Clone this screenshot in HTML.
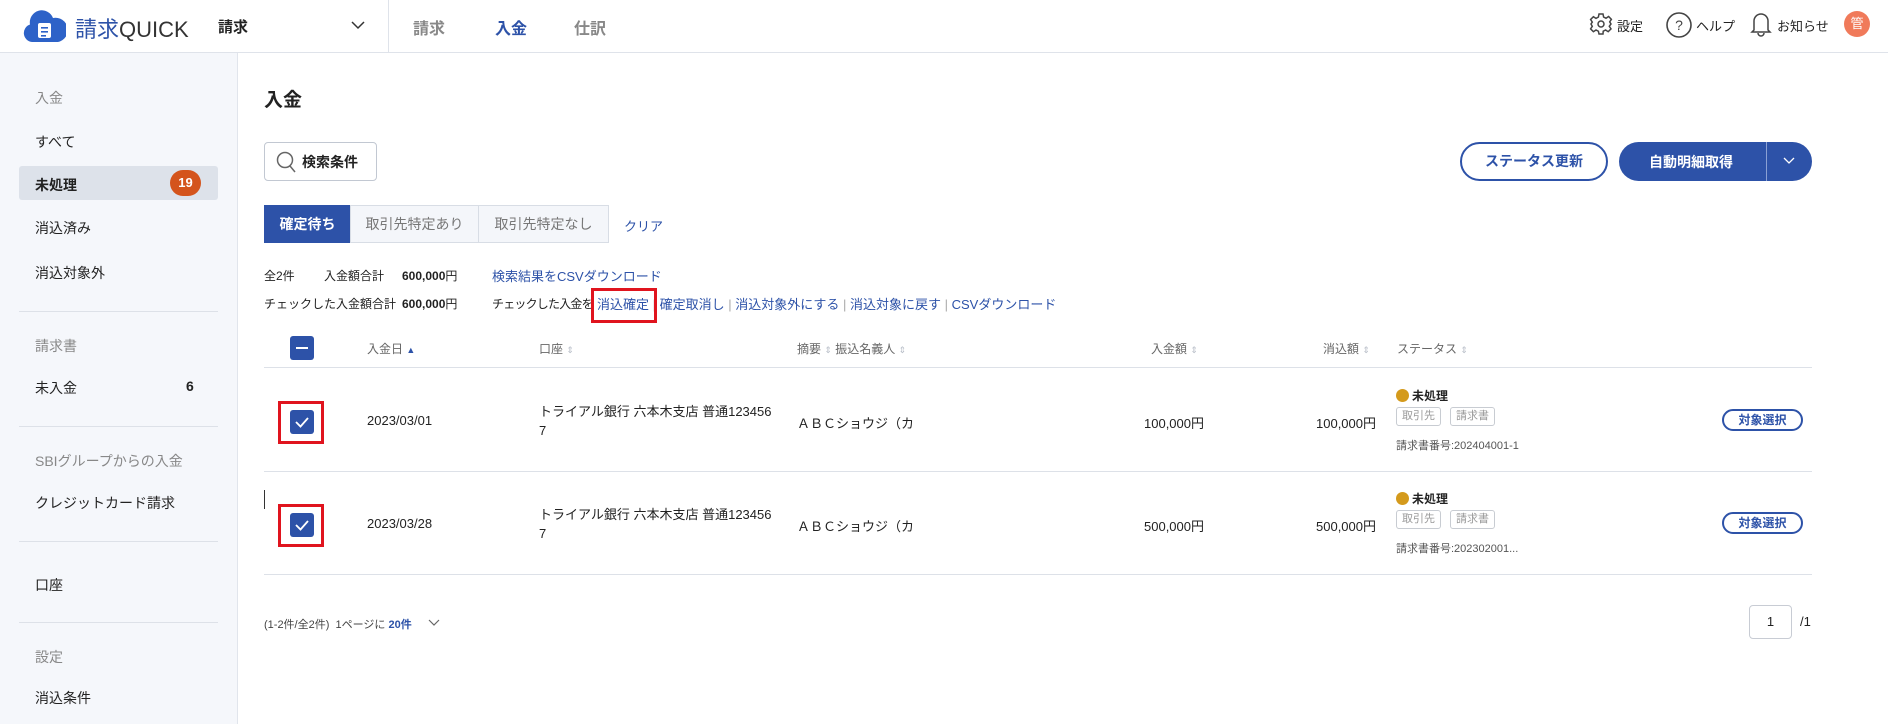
<!DOCTYPE html>
<html><head><meta charset="utf-8"><style>
*{margin:0;padding:0;box-sizing:border-box}
body{width:1888px;height:724px;position:relative;overflow:hidden;background:#fff;font-family:"Liberation Sans","Noto Sans CJK JP",sans-serif;color:#222;font-size:14px}
.a{position:absolute;white-space:nowrap}
.lnk{color:#2d52a8}
.g{color:#888}
.hdr{position:absolute;left:0;top:0;width:1888px;height:53px;border-bottom:1px solid #dfe3ea;background:#fff}
.side{position:absolute;left:0;top:53px;width:238px;height:671px;background:#f5f7fb;border-right:1px solid #e1e5ec}
.div{position:absolute;left:19px;width:199px;height:1px;background:#dde1e8}
.tab{position:absolute;top:205px;height:38px;line-height:36px;text-align:center;font-size:14px;color:#777;background:#f4f6fa;border:1px solid #d8dde5}
.th{position:absolute;top:340px;font-size:12px;color:#666}
.ar{color:#b8bec8;font-size:9px}
.cb{position:absolute;width:24px;height:24px;background:#2d52a8;border-radius:3px}
.red{position:absolute;border:3px solid #e0141e}
.tag{position:absolute;height:19px;border:1px solid #c8ccd2;border-radius:3px;font-size:11px;color:#999;line-height:17px;padding:0 5px}
.pill{position:absolute;width:81px;height:22px;border:2px solid #2d52a8;border-radius:11px;color:#2d52a8;font-size:12px;font-weight:bold;text-align:center;line-height:18px}
.hl{position:absolute;left:264px;width:1548px;height:1px;background:#dde1e8}
.sm{font-size:12px}
</style></head><body>
<div class="hdr"></div>
<svg class="a" style="left:22px;top:10px" width="44" height="34" viewBox="0 0 44 34"><path d="M10 32a9 9 0 0 1-2-17.5A12 12 0 0 1 31 8a9 9 0 0 1 5 24z" fill="#2d62c8"/><rect x="16" y="13" width="13" height="15" rx="2" fill="#fff"/><rect x="19" y="17" width="7" height="1.6" fill="#2d62c8"/><rect x="19" y="21" width="7" height="1.6" fill="#2d62c8"/><rect x="19" y="25" width="5" height="1.6" fill="#2d62c8"/></svg>
<div class="a" style="left:75px;top:12px;font-size:22px;color:#2d52a8">請求<span style="color:#333">QUICK</span></div>
<div class="a" style="left:218px;top:16px;font-size:15px;font-weight:bold">請求</div>
<svg class="a" style="left:351px;top:21px" width="14" height="9"><path d="M1 1l6 6 6-6" stroke="#333" stroke-width="1.5" fill="none"/></svg>
<div class="a" style="left:388px;top:0;width:1px;height:53px;background:#dfe3ea"></div>
<div class="a" style="left:413px;top:15px;font-size:16px;color:#888;font-weight:bold">請求</div>
<div class="a" style="left:495px;top:15px;font-size:16px;color:#2d52a8;font-weight:bold">入金</div>
<div class="a" style="left:574px;top:15px;font-size:16px;color:#888;font-weight:bold">仕訳</div>
<svg class="a" style="left:1589px;top:12px" width="24" height="24" viewBox="0 0 24 24"><path d="M10 2h4l.6 3 2.4 1.2 2.6-1.7 2.8 2.8-1.7 2.6L22 12l-1.7 2.3 1.7 2.6-2.8 2.8-2.6-1.7-2.4 1.2L14 22h-4l-.6-2.8-2.4-1.2-2.6 1.7-2.8-2.8 1.7-2.6L2 12l1.3-1.9-1.7-2.6 2.8-2.8 2.6 1.7L9.4 5z" stroke="#444" stroke-width="1.5" fill="none"/><circle cx="12" cy="12" r="3" stroke="#444" stroke-width="1.5" fill="none"/></svg>
<div class="a" style="left:1617px;top:16px;font-size:13px">設定</div>
<svg class="a" style="left:1665px;top:11px" width="28" height="28"><circle cx="14" cy="14" r="12" stroke="#444" stroke-width="1.6" fill="none"/><text x="14" y="19" font-size="14" text-anchor="middle" fill="#444" font-family="Liberation Sans">?</text></svg>
<div class="a" style="left:1696px;top:16px;font-size:13px">ヘルプ</div>
<svg class="a" style="left:1750px;top:11px" width="22" height="26"><path d="M4 19V10a7 7 0 0 1 14 0v9l2 2H2z M8 22a3 3 0 0 0 6 0" stroke="#444" stroke-width="1.5" fill="none"/></svg>
<div class="a" style="left:1777px;top:16px;font-size:13px">お知らせ</div>
<div class="a" style="left:1844px;top:11px;width:26px;height:26px;border-radius:13px;background:#f07a5a;color:#fff;font-size:13px;text-align:center;line-height:26px">管</div>

<div class="side"></div>
<div class="a g" style="left:35px;top:88px">入金</div>
<div class="a" style="left:35px;top:132px">すべて</div>
<div class="a" style="left:19px;top:166px;width:199px;height:34px;background:#dde2ea;border-radius:3px"></div>
<div class="a" style="left:35px;top:175px;font-weight:bold">未処理</div>
<div class="a" style="left:170px;top:170px;width:31px;height:26px;border-radius:13px;background:#d4541c;color:#fff;font-size:13px;font-weight:bold;text-align:center;line-height:26px">19</div>
<div class="a" style="left:35px;top:218px">消込済み</div>
<div class="a" style="left:35px;top:263px">消込対象外</div>
<div class="div" style="top:311px"></div>
<div class="a g" style="left:35px;top:336px">請求書</div>
<div class="a" style="left:35px;top:378px">未入金</div>
<div class="a" style="left:186px;top:378px;font-weight:bold">6</div>
<div class="div" style="top:426px"></div>
<div class="a g" style="left:35px;top:451px">SBIグループからの入金</div>
<div class="a" style="left:35px;top:493px">クレジットカード請求</div>
<div class="div" style="top:541px"></div>
<div class="a" style="left:35px;top:575px">口座</div>
<div class="div" style="top:622px"></div>
<div class="a g" style="left:35px;top:647px">設定</div>
<div class="a" style="left:35px;top:688px">消込条件</div>

<div class="a" style="left:264px;top:85px;font-size:19px;font-weight:bold">入金</div>
<div class="a" style="left:264px;top:142px;width:113px;height:39px;border:1px solid #c2c8d2;border-radius:4px"></div>
<svg class="a" style="left:275px;top:150px" width="22" height="24"><circle cx="10" cy="10" r="7.5" stroke="#666" stroke-width="1.5" fill="none"/><path d="M15 16l5 6" stroke="#666" stroke-width="1.5"/></svg>
<div class="a" style="left:302px;top:152px;font-size:14px;font-weight:bold">検索条件</div>
<div class="a" style="left:1460px;top:142px;width:148px;height:39px;border:2px solid #2d52a8;border-radius:20px;text-align:center;line-height:35px;font-size:14px;font-weight:bold;color:#2d52a8">ステータス更新</div>
<div class="a" style="left:1619px;top:142px;width:193px;height:39px;background:#2d52a8;border-radius:20px"></div>
<div class="a" style="left:1649px;top:152px;font-size:14px;font-weight:bold;color:#fff">自動明細取得</div>
<div class="a" style="left:1766px;top:142px;width:1px;height:39px;background:#8aa0d4"></div>
<svg class="a" style="left:1783px;top:157px" width="12" height="8"><path d="M1 1l5 5 5-5" stroke="#fff" stroke-width="1.3" fill="none"/></svg>

<div class="tab" style="left:264px;width:87px;background:#2d52a8;color:#fff;font-weight:bold;border-color:#2d52a8">確定待ち</div>
<div class="tab" style="left:350px;width:129px">取引先特定あり</div>
<div class="tab" style="left:478px;width:131px">取引先特定なし</div>
<div class="a lnk" style="left:624px;top:216px;font-size:13px">クリア</div>

<div class="a sm" style="left:264px;top:267px">全2件</div>
<div class="a sm" style="left:324px;top:267px">入金額合計</div>
<div class="a sm" style="left:402px;top:267px;font-weight:bold">600,000<span style="font-weight:normal">円</span></div>
<div class="a lnk" style="left:492px;top:266px;font-size:13px">検索結果をCSVダウンロード</div>
<div class="a sm" style="left:264px;top:295px">チェックした入金額合計</div>
<div class="a sm" style="left:402px;top:295px;font-weight:bold">600,000<span style="font-weight:normal">円</span></div>
<div class="a sm" style="left:492px;top:295px;letter-spacing:-0.8px">チェックした入金を</div>
<div class="a lnk" style="left:597px;top:294px;font-size:13px">消込確定 <span style="color:#aaa">|</span> 確定取消し <span style="color:#aaa">|</span> 消込対象外にする <span style="color:#aaa">|</span> 消込対象に戻す <span style="color:#aaa">|</span> CSVダウンロード</div>
<div class="red" style="left:591px;top:288px;width:66px;height:35px"></div>

<div class="cb" style="left:290px;top:336px"></div>
<div class="a" style="left:296px;top:347px;width:12px;height:2px;background:#fff"></div>
<div class="th" style="left:367px">入金日 <span style="color:#2d52a8;font-size:9px">▲</span></div>
<div class="th" style="left:539px">口座 <span class="ar">⇕</span></div>
<div class="th" style="left:797px">摘要 <span class="ar">⇕</span> 振込名義人 <span class="ar">⇕</span></div>
<div class="th" style="left:1151px">入金額 <span class="ar">⇕</span></div>
<div class="th" style="left:1323px">消込額 <span class="ar">⇕</span></div>
<div class="th" style="left:1397px">ステータス <span class="ar">⇕</span></div>
<div class="hl" style="top:367px"></div>
<div class="hl" style="top:471px"></div>
<div class="hl" style="top:574px"></div>

<div class="red" style="left:278px;top:401px;width:46px;height:43px"></div>
<div class="cb" style="left:290px;top:410px"></div>
<svg class="a" style="left:290px;top:410px" width="24" height="24"><path d="M6 12l4.5 4.5L18 8" stroke="#fff" stroke-width="1.8" fill="none"/></svg>
<div class="a" style="left:367px;top:413px;font-size:13px">2023/03/01</div>
<div class="a" style="left:539px;top:402px;font-size:13px;line-height:19px">トライアル銀行 六本木支店 普通123456<br>7</div>
<div class="a" style="left:797px;top:413px;font-size:13px">ＡＢＣショウジ（カ</div>
<div class="a" style="left:1100px;top:413px;width:104px;text-align:right;font-size:13px">100,000円</div>
<div class="a" style="left:1272px;top:413px;width:104px;text-align:right;font-size:13px">100,000円</div>
<div class="a" style="left:1396px;top:389px;width:13px;height:13px;border-radius:7px;background:#d49a1c"></div>
<div class="a" style="left:1412px;top:387px;font-size:12px;font-weight:bold">未処理</div>
<div class="tag" style="left:1396px;top:407px">取引先</div>
<div class="tag" style="left:1450px;top:407px">請求書</div>
<div class="a" style="left:1396px;top:437px;font-size:11px;color:#555">請求書番号:202404001-1</div>
<div class="pill" style="left:1722px;top:409px">対象選択</div>

<div class="a" style="left:264px;top:490px;width:1px;height:19px;background:#333"></div>
<div class="red" style="left:278px;top:504px;width:46px;height:43px"></div>
<div class="cb" style="left:290px;top:513px"></div>
<svg class="a" style="left:290px;top:513px" width="24" height="24"><path d="M6 12l4.5 4.5L18 8" stroke="#fff" stroke-width="1.8" fill="none"/></svg>
<div class="a" style="left:367px;top:516px;font-size:13px">2023/03/28</div>
<div class="a" style="left:539px;top:505px;font-size:13px;line-height:19px">トライアル銀行 六本木支店 普通123456<br>7</div>
<div class="a" style="left:797px;top:516px;font-size:13px">ＡＢＣショウジ（カ</div>
<div class="a" style="left:1100px;top:516px;width:104px;text-align:right;font-size:13px">500,000円</div>
<div class="a" style="left:1272px;top:516px;width:104px;text-align:right;font-size:13px">500,000円</div>
<div class="a" style="left:1396px;top:492px;width:13px;height:13px;border-radius:7px;background:#d49a1c"></div>
<div class="a" style="left:1412px;top:490px;font-size:12px;font-weight:bold">未処理</div>
<div class="tag" style="left:1396px;top:510px">取引先</div>
<div class="tag" style="left:1450px;top:510px">請求書</div>
<div class="a" style="left:1396px;top:540px;font-size:11px;color:#555">請求書番号:202302001...</div>
<div class="pill" style="left:1722px;top:512px">対象選択</div>

<div class="a" style="left:264px;top:616px;font-size:11px;color:#444">(1-2件/全2件) &nbsp;1ページに <b style="color:#2d52a8">20件</b></div>
<svg class="a" style="left:428px;top:619px" width="12" height="8"><path d="M1 1l5 5 5-5" stroke="#666" stroke-width="1.2" fill="none"/></svg>
<div class="a" style="left:1749px;top:605px;width:43px;height:34px;border:1px solid #c8ccd4;border-radius:4px;text-align:center;line-height:32px;font-size:13px">1</div>
<div class="a" style="left:1800px;top:614px;font-size:13px">/1</div>
</body></html>
